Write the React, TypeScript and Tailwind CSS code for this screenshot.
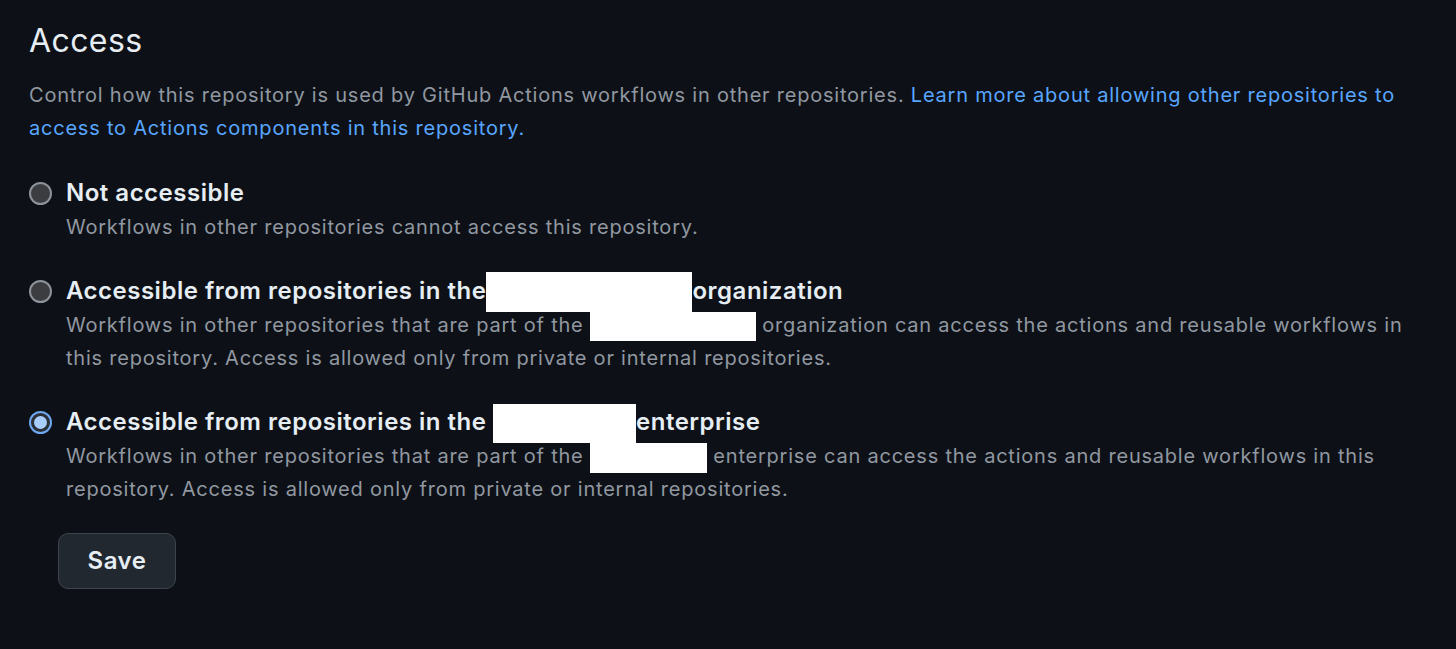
import React, { useState } from 'react';

const FONT = { fontFamily: 'Inter, "Noto Sans", "Liberation Sans", sans-serif' };

type Option = {
  id: string;
  title: React.ReactNode;
  desc: React.ReactNode;
};

function Redacted({ className }: { className: string }) {
  return <span className={`inline-block bg-white align-middle ${className}`} />;
}

function Radio({ checked }: { checked: boolean }) {
  if (checked) {
    return (
      <span className="mt-[7px] flex h-[23px] w-[23px] shrink-0 items-center justify-center rounded-full border-2 border-[#6ea8f0] bg-[#2b2f36]">
        <span className="h-[13px] w-[13px] rounded-full bg-[#a9cdfd]" />
      </span>
    );
  }
  return (
    <span className="mt-[7px] h-[23px] w-[23px] shrink-0 rounded-full border-2 border-[#8d939b] bg-[#3c3d40]" />
  );
}

export default function App() {
  const [selected, setSelected] = useState('enterprise');

  const options: Option[] = [
    {
      id: 'none',
      title: 'Not accessible',
      desc: 'Workflows in other repositories cannot access this repository.',
    },
    {
      id: 'org',
      title: (
        <>
          Accessible from repositories in the<Redacted className="-my-[6px] h-[40px] w-[206px]" />organization
        </>
      ),
      desc: (
        <>
          Workflows in other repositories that are part of the <Redacted className="-my-[4px] h-[29px] w-[166px]" />{' '}
          organization can access the actions and reusable workflows in this repository. Access is allowed only from
          private or internal repositories.
        </>
      ),
    },
    {
      id: 'enterprise',
      title: (
        <>
          Accessible from repositories in the <Redacted className="-my-[6px] h-[39px] w-[143px]" />enterprise
        </>
      ),
      desc: (
        <>
          Workflows in other repositories that are part of the <Redacted className="-my-[4px] h-[30px] w-[117px]" />{' '}
          enterprise can access the actions and reusable workflows in this repository. Access is allowed only from
          private or internal repositories.
        </>
      ),
    },
  ];

  return (
    <div className="min-h-[649px] w-full bg-[#0d1117] pl-[29px] pr-[40px] pt-[21px]" style={FONT}>
      <h2 className="text-[32px] font-normal leading-[40px] tracking-[0.4px] text-[#e6edf3]">Access</h2>
      <p className="mt-[18px] max-w-[1390px] text-[20px] leading-[33px] tracking-[0.78px] text-[#9198a1]">
        Control how this repository is used by GitHub Actions workflows in other repositories.{' '}
        <a className="text-[#58a6ff]" href="#">
          Learn more about allowing other repositories to access to Actions components in this repository.
        </a>
      </p>

      <div className="mt-[30px] flex flex-col gap-[29px]">
        {options.map((o) => (
          <label key={o.id} className="flex cursor-pointer gap-[14px]" onClick={() => setSelected(o.id)}>
            <Radio checked={selected === o.id} />
            <div className="min-w-0 max-w-[1340px]">
              <div className="text-[24px] font-semibold leading-[36px] tracking-[0.5px] text-[#e6edf3]">{o.title}</div>
              <div className="text-[20px] leading-[33px] tracking-[0.78px] text-[#9198a1]">{o.desc}</div>
            </div>
          </label>
        ))}
      </div>

      <button className="ml-[29px] mt-[27px] h-[56px] w-[118px] rounded-[10px] border border-[#3d444d] bg-[#212830] text-[24px] font-semibold tracking-[0.5px] text-[#e6edf3]">
        Save
      </button>
    </div>
  );
}
